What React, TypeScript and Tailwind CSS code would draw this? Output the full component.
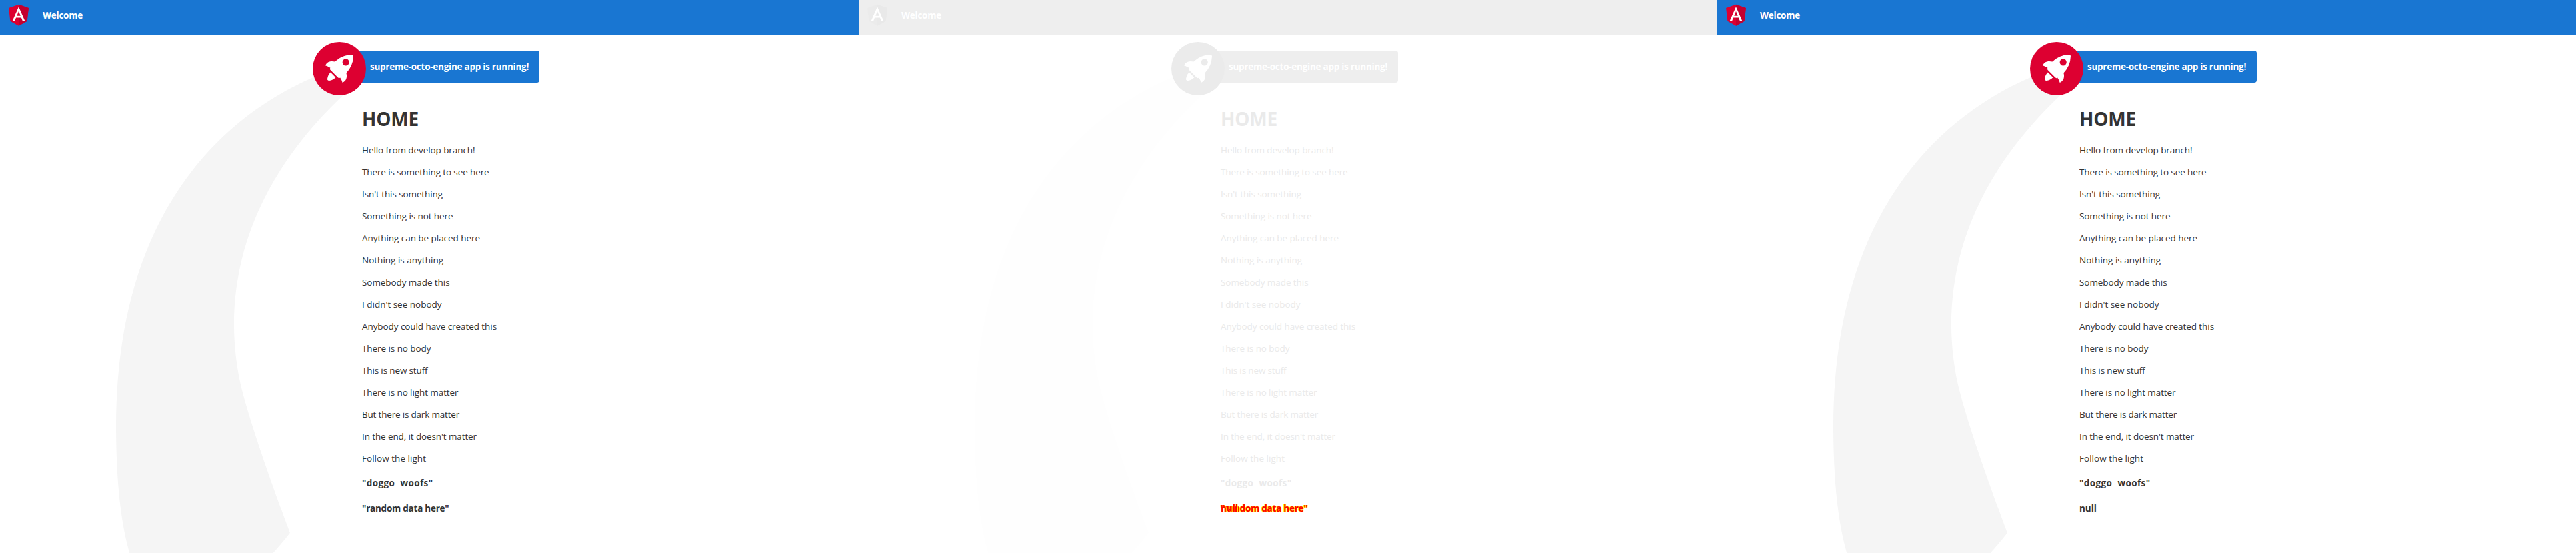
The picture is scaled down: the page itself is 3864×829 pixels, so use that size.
import { useLayoutEffect, useRef, type ReactNode } from "react";

type Theme = {
  header: string;
  text: string;
  light: string;
  shield: string;
  shieldShade: string;
  badge: string;
  smoke: string;
};

const vivid: Theme = {
  header: "bg-[#1976d2]",
  text: "text-[#333333]",
  light: "text-white",
  shield: "fill-[#dd0031]",
  shieldShade: "fill-[#c3002f]",
  badge: "fill-[#dd0031]",
  smoke: "fill-[#f5f5f5]",
};

const faded: Theme = {
  header: "bg-[#eeeeee]",
  text: "text-[#eaeaea]",
  light: "text-white",
  shield: "fill-[#ebebeb]",
  shieldShade: "fill-[#e9e9e9]",
  badge: "fill-[#ebebeb]",
  smoke: "fill-[#fefefe]",
};

const lines: [string, number][] = [
  ["Hello from develop branch!", 169.5],
  ["There is something to see here", 190.5],
  ["Isn't this something", 121],
  ["Something is not here", 136.5],
  ["Anything can be placed here", 177],
  ["Nothing is anything", 122],
  ["Somebody made this", 131.5],
  ["I didn't see nobody", 119.5],
  ["Anybody could have created this", 202],
  ["There is no body", 103.5],
  ["This is new stuff", 98.5],
  ["There is no light matter", 144.5],
  ["But there is dark matter", 146],
  ["In the end, it doesn't matter", 172],
  ["Follow the light", 96],
];

/** Spreads its letters so that the run takes the given width. */
function Run({ width, className = "", children }: { width: number; className?: string; children: ReactNode }) {
  const ref = useRef<HTMLSpanElement>(null);
  useLayoutEffect(() => {
    const el = ref.current;
    if (!el) return;
    el.style.letterSpacing = "0px";
    const count = el.textContent?.length ?? 1;
    el.style.letterSpacing = `${(width - el.getBoundingClientRect().width) / count}px`;
  }, [width]);
  return (
    <span ref={ref} className={`inline-block whitespace-nowrap ${className}`}>
      {children}
    </span>
  );
}

function Shield({ theme }: { theme: Theme }) {
  return (
    <svg className="mt-0.5 size-10" viewBox="0 0 250 250">
      <path className={theme.shield} d="M125 30L31.9 63.2l14.2 123.1L125 230l78.9-43.7 14.2-123.1z" />
      <path className={theme.shieldShade} d="M125 30v22.2-.1V230l78.9-43.7 14.2-123.1L125 30z" />
      <path
        className="fill-white"
        d="M125 52.1L66.8 182.6h21.7l11.7-29.2h49.4l11.7 29.2H183L125 52.1zm17 83.3h-34l17-40.9 17 40.9z"
      />
    </svg>
  );
}

function Rocket({ theme }: { theme: Theme }) {
  return (
    <svg className="absolute -top-[13px] left-0 size-20" viewBox="0 0 101.678 101.678">
      <circle className={theme.badge} cx="50.839" cy="50.839" r="50.839" />
      <g className="fill-white" transform="translate(24.185 24.185)">
        <path
          transform="translate(0.371 3.363)"
          d="M3.4,42.615a3.084,3.084,0,0,0,3.553,3.553,21.419,21.419,0,0,0,12.215-6.107L9.511,30.4A21.419,21.419,0,0,0,3.4,42.615Z"
        />
        <path d="M53.3,3.221A3.09,3.09,0,0,0,50.081,0,48.227,48.227,0,0,0,18.322,13.437c-6-1.666-14.991-1.221-18.322,7.218A33.892,33.892,0,0,1,9.439,25.1l-.333.666a3.013,3.013,0,0,0,.555,3.553L23.985,43.641a2.9,2.9,0,0,0,3.553.555l.666-.333A33.892,33.892,0,0,1,32.647,53.3c8.55-3.664,8.884-12.326,7.218-18.322A48.227,48.227,0,0,0,53.3,3.221ZM34.424,9.772a6.439,6.439,0,1,1,9.106,9.106,6.368,6.368,0,0,1-9.106,0A6.467,6.467,0,0,1,34.424,9.772Z" />
      </g>
    </svg>
  );
}

function Smoke({ theme }: { theme: Theme }) {
  return (
    <svg className="absolute top-[89.5px] left-[174px] -z-10 h-[825px] w-[393px]" viewBox="0 0 516.119 1083.632">
      <path
        className={theme.smoke}
        transform="translate(-147.02 -140.939)"
        d="M644.6,141S143.02,215.537,147.049,870.207s342.774,201.755,342.774,201.755S404.659,847.213,388.815,762.2c-27.116-145.51-11.551-384.124,271.9-609.1C671.15,139.365,644.6,141,644.6,141Z"
      />
    </svg>
  );
}

function Panel({ theme, children }: { theme: Theme; children: ReactNode }) {
  return (
    <section className={`relative isolate h-[829px] w-[1288px] shrink-0 overflow-hidden ${theme.text}`}>
      <Smoke theme={theme} />
      <header className={`flex h-[52px] items-start pl-2 font-bold ${theme.header} ${theme.light}`}>
        <Shield theme={theme} />
        <span className="mt-[13px] ml-4 leading-5">
          <Run width={60}>Welcome</Run>
        </span>
      </header>
      <div className="relative mt-6 ml-[469px] flex h-12 w-[340px]">
        <div className={`ml-10 flex h-12 flex-1 items-center rounded pl-[46px] font-bold ${theme.header} ${theme.light}`}>
          <Run width={238}>supreme-octo-engine app is running!</Run>
        </div>
        <Rocket theme={theme} />
      </div>
      <main className="ml-[543px]">
        <h1 className="mt-[34px] h-10 text-[28px] leading-10 font-bold">
          <Run width={85}>HOME</Run>
        </h1>
        <div className="mt-[17px]">
          {lines.map(([text, width]) => (
            <p key={text} className="h-[33px] leading-5">
              <Run width={width}>{text}</Run>
            </p>
          ))}
        </div>
        <p className="mt-1 h-[38px] leading-5 font-bold">
          <Run width={106.5}>
            "doggo<span className="font-normal">=</span>woofs"
          </Run>
        </p>
        <p className="relative leading-5 font-bold">{children}</p>
      </main>
    </section>
  );
}

export default function App() {
  return (
    <div className="flex h-[829px] w-[3864px] overflow-hidden bg-white font-['Open_Sans','Noto_Sans',sans-serif] text-[13.5px]">
      <Panel theme={vivid}>
        <Run width={130.5}>"random data here"</Run>
      </Panel>
      <Panel theme={faded}>
        <Run width={130.5} className="text-[#ff0000] [text-shadow:1px_0_0_#ffff00,-1px_0_0_#ffff00]">
          "random data here"
        </Run>
        <span className="absolute top-0 left-0 text-[#ff0000] [text-shadow:1px_0_0_#ffff00]">
          <Run width={26}>null</Run>
        </span>
      </Panel>
      <Panel theme={vivid}>
        <Run width={26}>null</Run>
      </Panel>
    </div>
  );
}
